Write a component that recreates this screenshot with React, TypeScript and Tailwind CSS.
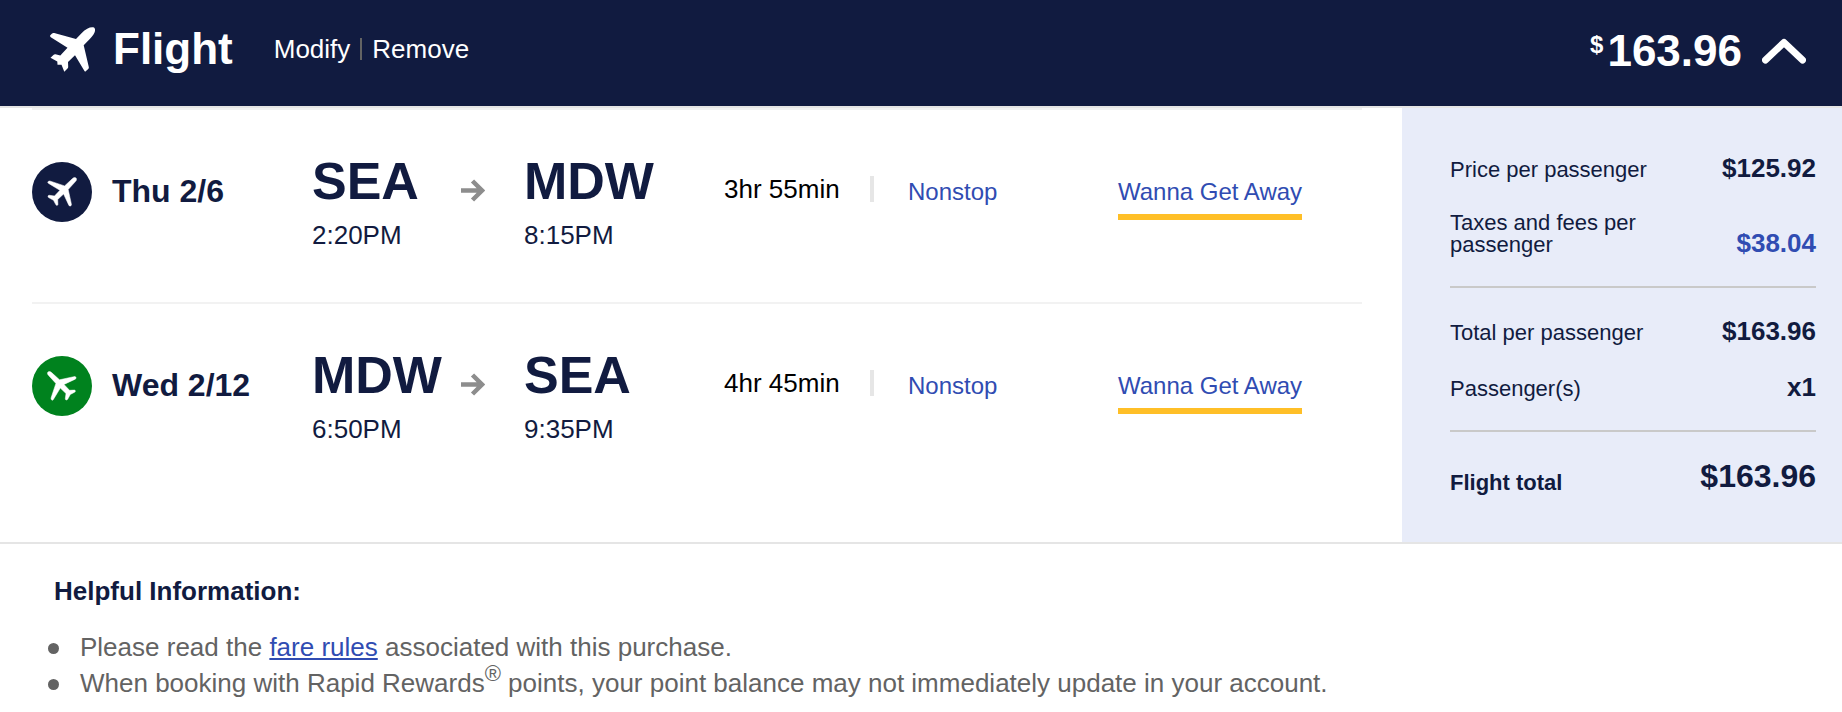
import React, { useState } from "react";

const PLANE_SOLID =
  "M44.300.8C41.500-.6 36.500 1.200 31.500 6.200L26 11.900 4.200 6C3.200 5.700 2.500 6 1.800 6.700L.3 8.300C-.2 9 0 9.700.8 10.200L17.500 20.800 10.300 28.500 5.500 27.300C4.800 27.100 4.200 27.300 3.700 27.800L.5 30.800 7.300 34.600 7.500 37.800 11.500 37.700 14.300 44.800 17.500 41.500C18 41 18.200 40.400 18.200 39.700L18 35 25 28.200 34.300 43.800 35.100 44.800 38 42.200C38.700 41.600 39 40.900 38.800 40L33.700 18.300 39.800 12C44.300 7.300 46.300 3.300 44.300.8Z";

const PLANE_SLIM =
  "M29 1C28.100.1 26.700.4 25.500 1.600L17.600 8.900 3.500 4.200C2.500 3.900 1.500 4 1 4.800.6 5.400.8 6 1.600 6.400L12.900 13.300 7.500 19 2.500 18.300C1.700 18.200 1 18.700 1 19.400 1 20 1.400 20.500 2 20.800L6.500 23.300 8.800 27.600C9.200 28.500 10.200 28.700 10.700 28 11 27.600 11 27.100 10.900 26.500L10.700 22.500 16.600 17 21.800 28.200C22.200 29.100 23.400 29.300 24 28.700 24.500 28.200 24.500 27.500 24.300 26.700L21.200 12.500 28.400 4.600C29.600 3.400 29.900 1.900 29 1Z";

type Flight = {
  date: string;
  from: string;
  to: string;
  departs: string;
  arrives: string;
  duration: string;
  returning: boolean;
};

const flights: Flight[] = [
  {
    date: "Thu 2/6",
    from: "SEA",
    to: "MDW",
    departs: "2:20PM",
    arrives: "8:15PM",
    duration: "3hr 55min",
    returning: false,
  },
  {
    date: "Wed 2/12",
    from: "MDW",
    to: "SEA",
    departs: "6:50PM",
    arrives: "9:35PM",
    duration: "4hr 45min",
    returning: true,
  },
];

const Airport = ({ code, time }: { code: string; time: string }) => (
  <div className="-mt-[7px]">
    <div className="text-[52px] leading-[52px] font-bold">{code}</div>
    <div className="mt-3 text-[26px] leading-8">{time}</div>
  </div>
);

const FlightRow = ({ flight }: { flight: Flight }) => (
  <div className="grid grid-cols-[280fr_149fr_63fr_200fr_184fr_210fr_244fr] items-start border-t-2 border-[#f2f2f2] pt-[52px] pb-[51px]">
    <div className="flex items-start gap-5">
      <span
        className={`flex size-[60px] shrink-0 items-center justify-center rounded-full ${flight.returning ? "bg-[#00821e]" : "bg-[#111b40]"}`}
      >
        <svg
          viewBox="0 0 30 30"
          className={`size-[30px] fill-white stroke-white ${flight.returning ? "-rotate-90" : ""}`}
          strokeWidth="0.5"
          aria-hidden="true"
        >
          <path d={PLANE_SLIM} />
        </svg>
      </span>
      <span className="text-[32px] leading-[58px] font-bold whitespace-nowrap">
        {flight.date}
      </span>
    </div>

    <Airport code={flight.from} time={flight.departs} />
    <svg
      viewBox="0 0 24 24"
      className="mt-4 size-6"
      fill="none"
      stroke="#8d8d8d"
      strokeWidth="4.5"
      aria-hidden="true"
    >
      <path d="M0 12.500H20M11.500 3L21 12.500 11.500 22" />
    </svg>
    <Airport code={flight.to} time={flight.arrives} />

    <div className="mt-[11px] flex justify-between pr-[34px] text-[26px] leading-8 whitespace-nowrap text-black">
      {flight.duration}
      <span className="mt-[3px] h-[26px] w-1 bg-[#e6e6e6]" />
    </div>
    <div className="mt-3.5">
      <button type="button" className="text-2xl text-[#304cb2]">
        Nonstop
      </button>
    </div>
    <div className="mt-3.5">
      <button
        type="button"
        className="border-b-[6px] border-[#ffbf27] pb-1.5 text-2xl whitespace-nowrap text-[#304cb2]"
      >
        Wanna Get Away
      </button>
    </div>
  </div>
);

const PriceSummary = () => (
  <dl className="w-[440px] shrink-0 bg-[#e8ecf9] pt-11 pr-[26px] pb-10 pl-12 text-[22px] leading-[22px]">
    <div className="flex items-baseline justify-between">
      <dt>Price per passenger</dt>
      <dd className="text-[26px] leading-8 font-bold">$125.92</dd>
    </div>
    <div className="mt-7 flex items-end justify-between border-b-2 border-[#c9c9c9] pb-[30px]">
      <dt className="w-[200px]">Taxes and fees per passenger</dt>
      <dd>
        <button
          type="button"
          className="block text-[26px] leading-[26px] font-bold text-[#304cb2]"
        >
          $38.04
        </button>
      </dd>
    </div>
    <div className="mt-[27px] flex items-baseline justify-between">
      <dt>Total per passenger</dt>
      <dd className="text-[26px] leading-8 font-bold">$163.96</dd>
    </div>
    <div className="mt-6 flex items-baseline justify-between border-b-2 border-[#c9c9c9] pb-[27px]">
      <dt>Passenger(s)</dt>
      <dd className="text-[26px] leading-8 font-bold">x1</dd>
    </div>
    <div className="mt-6 flex items-end justify-between font-bold">
      <dt className="pb-0.5">Flight total</dt>
      <dd className="text-[32px] leading-10">$163.96</dd>
    </div>
  </dl>
);

const InfoItem = ({ children }: { children: React.ReactNode }) => (
  <li className="flex gap-[21px] before:mt-[14px] before:size-[11px] before:shrink-0 before:rounded-full before:bg-[#636363]">
    <span>{children}</span>
  </li>
);

export default function App() {
  const [isOpen, setIsOpen] = useState(true);

  return (
    <main className="bg-white font-['Liberation_Sans',Arial,sans-serif] text-[#111b40]">
      <header className="flex h-[106px] items-center justify-between bg-[#111b40] pr-9 pb-1 pl-[50px] text-white">
        <div className="flex items-center pb-1">
          <svg
            viewBox="0 0 45 45"
            className="size-[45px] fill-white"
            aria-hidden="true"
          >
            <path d={PLANE_SOLID} />
          </svg>
          <h2 className="ml-[18px] text-[44px] font-bold">Flight</h2>
          <div className="ml-[41px] flex items-center text-[26px]">
            <button type="button">Modify</button>
            <span className="mx-2.5 h-[22px] w-0.5 bg-[#636363]" />
            <button type="button">Remove</button>
          </div>
        </div>
        <div className="flex items-center gap-5">
          <div className="flex items-start text-[44px] leading-[52px] font-bold">
            <span className="mr-1 text-2xl leading-10">$</span>
            163.96
          </div>
          <button
            type="button"
            aria-label="Toggle flight details"
            aria-expanded={isOpen}
            onClick={() => setIsOpen(!isOpen)}
          >
            <svg
              viewBox="0 0 44 26"
              className={`h-[26px] w-11 ${isOpen ? "" : "rotate-180"}`}
              fill="none"
              stroke="white"
              strokeWidth="7"
              strokeLinecap="round"
              strokeLinejoin="round"
            >
              <path d="M3.500 22L22 4.500 40.500 22" />
            </svg>
          </button>
        </div>
      </header>

      {isOpen && (
        <section className="flex border-y-2 border-[#e5e5e5]">
          <div className="flex-1 pr-10 pb-[46px] pl-8">
            {flights.map((flight) => (
              <FlightRow key={flight.date} flight={flight} />
            ))}
          </div>
          <PriceSummary />
        </section>
      )}

      <section className="px-12 pt-[31px] text-[26px] leading-9">
        <h3 className="pl-1.5 leading-8 font-bold">Helpful Information:</h3>
        <ul className="mt-[22px] text-[#636363]">
          <InfoItem>
            Please read the{" "}
            <a href="#fare-rules" className="text-[#304cb2] underline">
              fare rules
            </a>{" "}
            associated with this purchase.
          </InfoItem>
          <InfoItem>
            When booking with Rapid Rewards
            <sup className="text-[22px]">®</sup> points, your point balance may
            not immediately update in your account.
          </InfoItem>
        </ul>
      </section>
    </main>
  );
}
